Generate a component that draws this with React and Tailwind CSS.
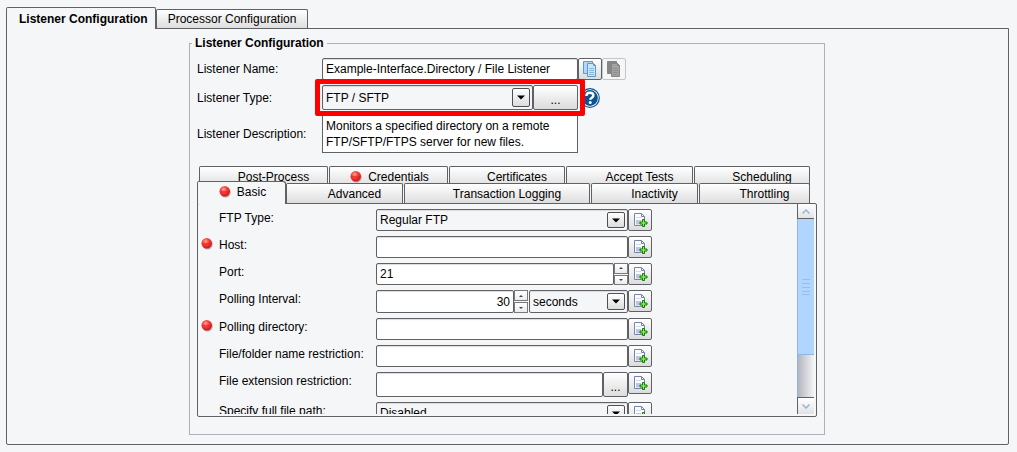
import React, { useState } from 'react';

const fieldClass = 'h-full min-w-0 flex-1 rounded-[2px] border border-[#5f6165] bg-white px-[3px] shadow-[inset_0_1px_1px_#dcdcdc]';
const buttonClass = 'flex shrink-0 items-center justify-center rounded-[2px] border border-[#5f6165] bg-linear-to-b from-white to-[#dcdcdc]';

function RedBall() {
    return (
        <svg width="14" height="14" viewBox="0 0 14 14" aria-hidden="true">
            <defs>
                <radialGradient id="ball" cx="0.4" cy="0.32" r="0.65">
                    <stop offset="0" stopColor="#ffa99c" />
                    <stop offset="0.4" stopColor="#fa4a42" />
                    <stop offset="1" stopColor="#dc1416" />
                </radialGradient>
            </defs>
            <circle cx="7.5" cy="7.2" r="5.2" fill="#8b8b8b" opacity="0.7" />
            <circle cx="6.7" cy="6.2" r="5.2" fill="url(#ball)" />
            <path d="M2.5 6.8h8.4" stroke="#c81a1a" strokeWidth="0.8" opacity="0.6" />
        </svg>
    );
}

function AddPageIcon() {
    return (
        <svg width="16" height="16" viewBox="0 0 16 16" aria-hidden="true">
            <path d="M2.5 1.5h7l3 3v9h-10z" fill="#fbfcff" stroke="#7585ad" />
            <path d="M9.5 1.5v3h3" fill="none" stroke="#7585ad" />
            <path d="M4 5.5h5" stroke="#d3d7e6" />
            <path d="M4 8h5v4.5H4z" fill="#bfc4dd" />
            <path d="M10.500 7.500h2v2.500h2.500v2h-2.500v2.500h-2v-2.500h-2.500v-2h2.500z" fill="#8df04c" stroke="#0a7d0a" />
        </svg>
    );
}

function PagesIcon({ disabled }) {
    const back = disabled ? '#868686' : '#b4d6f0';
    const front = disabled ? '#a3a3a3' : '#cbe5f8';
    const line = disabled ? '#858585' : '#5a9acb';
    return (
        <svg width="16" height="18" viewBox="0 0 16 18" aria-hidden="true">
            <path d="M1.5 1.5h9v12h-9z" fill={back} stroke={line} />
            <path d="M5.5 3.5h6l2 2v11h-8z" fill={front} stroke={line} />
            <path d="M11.5 3.5v2h2" fill="none" stroke={line} />
            <path d="M7 8.5h5M7 10.5h5M7 12.5h5M7 14.5h5" stroke={line} opacity="0.6" />
        </svg>
    );
}

function HelpIcon() {
    return (
        <svg width="20" height="20" viewBox="0 0 20 20" aria-hidden="true">
            <circle cx="10" cy="10" r="9.3" fill="#fff" stroke="#0d5590" strokeWidth="1.2" />
            <circle cx="10" cy="10" r="7.9" fill="#0d5590" />
            <path d="M6.4 8c0-2.300 1.500-3.200 3.500-3.200s3.500 0.900 3.500 2.700c0 2.200-3.200 2.100-3.200 4.300" fill="none" stroke="#fff" strokeWidth="2.400" />
            <circle cx="10.200" cy="14.600" r="1.500" fill="#fff" />
        </svg>
    );
}

function DropDown({ id, options, label, className = 'h-full flex-1' }) {
    return (
        <div className={`relative min-w-0 ${className}`}>
            <select
                id={id}
                aria-label={label}
                className="h-full w-full appearance-none rounded-[2px] border border-[#5f6165] bg-[#f4f6f8] px-[3px] shadow-[inset_0_1px_1px_#dcdcdc]"
            >
                {options.map(o => <option key={o}>{o}</option>)}
            </select>
            <span className="pointer-events-none absolute inset-y-[3px] right-[3px] flex w-[18px] items-center justify-center rounded-[2px] border border-[#4d4f52] bg-linear-to-b from-white to-[#dcdcdc]">
                <svg width="8" height="5" viewBox="0 0 8 5" aria-hidden="true">
                    <path d="M0 0.500h8L4 4.500z" fill="#000" />
                </svg>
            </span>
        </div>
    );
}

function SpinnerButtons({ name }) {
    const cls = 'flex flex-1 items-center justify-center border border-[#77797d] bg-linear-to-b from-white to-[#ececec]';
    return (
        <span className="flex h-full w-[14px] shrink-0 flex-col gap-px">
            <button type="button" aria-label={`Increase ${name}`} className={cls}>
                <svg width="4" height="2" viewBox="0 0 4 2"><path d="M0 2h4L2 0z" fill="#444" /></svg>
            </button>
            <button type="button" aria-label={`Decrease ${name}`} className={cls}>
                <svg width="4" height="2" viewBox="0 0 4 2"><path d="M0 0h4L2 2z" fill="#444" /></svg>
            </button>
        </span>
    );
}

// One line of the form: required marker, label, the field and its add button
function FormRow({ id, label, required, height = 'h-[22px]', children }) {
    return (
        <div className={`flex shrink-0 items-start ${height}`}>
            <span className="flex w-[21px] shrink-0 pl-[2px] pt-px">{required && <RedBall />}</span>
            <label htmlFor={id} className="w-[157px] shrink-0 pt-px leading-[17px] whitespace-nowrap">{label}</label>
            <div className="flex h-full w-[252px]">{children}</div>
            <button type="button" aria-label={`Add to ${label}`} className={`${buttonClass} h-[22px] w-[24px]`}>
                <AddPageIcon />
            </button>
        </div>
    );
}

const backTabs = [
    { name: 'Post-Process' },
    { name: 'Credentials', required: true },
    { name: 'Certificates' },
    { name: 'Accept Tests' },
    { name: 'Scheduling' },
];

const frontTabs = [
    { name: 'Basic', required: true },
    { name: 'Advanced' },
    { name: 'Transaction Logging' },
    { name: 'Inactivity' },
    { name: 'Throttling' },
];

function SettingTab({ tab, selected, onSelect }) {
    const look = selected
        ? 'z-10 -mt-[2px] -mb-px rounded-tr-[3px] bg-[#f4f6f8] pb-[3px]'
        : 'mr-px bg-linear-to-b from-white to-[#dedede]';
    return (
        <button
            type="button"
            role="tab"
            aria-selected={selected}
            onClick={() => onSelect(tab.name)}
            className={`relative flex items-center justify-center gap-1 rounded-t-[2px] border border-b-0 border-[#5f6165] whitespace-nowrap ${look}`}
        >
            <span className="w-[16px] pl-px">{tab.required && <RedBall />}</span>
            {tab.name}
        </button>
    );
}

function ScrollBar() {
    return (
        <div className="flex w-[17px] shrink-0 flex-col" aria-hidden="true">
            <div className="flex h-[15px] items-center justify-center border-b border-l border-[#5f6165] bg-linear-to-b from-white to-[#e2e2e2]">
                <svg width="8" height="5" viewBox="0 0 8 5"><path d="M0.500 4.500L4 1l3.500 3.500" fill="none" stroke="#8fb6e2" strokeWidth="1.500" /></svg>
            </div>
            <div className="flex flex-[137] items-center justify-center border-b border-l border-[#8fb6e2] bg-[#b0d5ff]">
                <svg width="8" height="18" viewBox="0 0 8 18"><path d="M0 1.500h8M0 5.500h8M0 9.500h8M0 13.500h8M0 16.500h8" stroke="#93bfee" /></svg>
            </div>
            <div className="flex-[42] border-l border-[#8fb6e2] bg-linear-to-r from-[#b4b4c0] to-[#f4f4f4]" />
            <div className="flex h-[17px] items-center justify-center border-t border-l border-[#5f6165] bg-linear-to-b from-white to-[#e2e2e2]">
                <svg width="8" height="5" viewBox="0 0 8 5"><path d="M0.500 0.500L4 4l3.500-3.500" fill="none" stroke="#8fb6e2" strokeWidth="1.500" /></svg>
            </div>
        </div>
    );
}

function ListenerForm() {
    const [active, setActive] = useState('Basic');

    return (
        <fieldset className="mx-auto w-full max-w-[636px] border border-[#aeafba] px-[7px] pb-[17px]">
            <legend className="-ml-[5px] px-[3px] leading-[15px] font-bold">Listener Configuration</legend>

            <div className="flex flex-col gap-[5px] pt-[7px]">
                <div className="flex h-[22px] items-center">
                    <label htmlFor="name" className="w-[125px] shrink-0">Listener Name:</label>
                    <input id="name" defaultValue="Example-Interface.Directory / File Listener" className={`${fieldClass} max-w-[256px]`} />
                    <button type="button" aria-label="Copy" className={`${buttonClass} h-[22px] w-[24px]`}>
                        <PagesIcon />
                    </button>
                    <button type="button" aria-label="Paste" disabled className="flex h-[22px] w-[24px] items-center justify-center rounded-[2px] border border-[#c4c5c8]">
                        <PagesIcon disabled />
                    </button>
                </div>

                <div className="flex h-[25px] items-center">
                    <label htmlFor="type" className="w-[125px] shrink-0">Listener Type:</label>
                    <div className="relative flex h-full w-[256px]">
                        <DropDown id="type" options={['FTP / SFTP']} />
                        <button type="button" aria-label="Edit listener type" className={`${buttonClass} w-[45px] pt-1`}>...</button>
                        {/* red highlight around the type selector */}
                        <span className="pointer-events-none absolute -inset-x-[7px] -inset-y-[6px] z-10 rounded-[2px] border-5 border-[#ff0000]" />
                    </div>
                    <button type="button" aria-label="Help" className="ml-[2px]"><HelpIcon /></button>
                </div>

                <div className="flex items-center">
                    <label htmlFor="description" className="w-[125px] shrink-0">Listener Description:</label>
                    <textarea
                        id="description"
                        rows={2}
                        readOnly
                        defaultValue="Monitors a specified directory on a remote FTP/SFTP/FTPS server for new files."
                        className="w-[256px] resize-none overflow-hidden border border-[#5f6165] bg-white px-[3px] py-[2px] leading-[16px]"
                    />
                </div>
            </div>

            <div role="tablist" className="relative mt-[13px]">
                <div className="mr-[6px] ml-[2px] -mb-[4px] grid h-[21px] grid-cols-[130fr_120fr_117fr_128fr_117fr]">
                    {backTabs.map(t => <SettingTab key={t.name} tab={t} onSelect={setActive} />)}
                </div>
                <div className="relative mr-[6px] grid h-[20px] grid-cols-[89fr_118fr_187fr_108fr_112fr]">
                    {frontTabs.map(t => <SettingTab key={t.name} tab={t} selected={t.name === 'Basic'} onSelect={setActive} />)}
                </div>
            </div>

            <div role="tabpanel" aria-label={active} className="flex h-[214px] rounded-[2px] border border-[#5f6165] pr-[2px] pb-[2px]">
                <div className="flex min-w-0 flex-1 flex-col gap-[5px] overflow-hidden pt-[5px]">
                    <FormRow id="ftp-type" label="FTP Type:">
                        <DropDown id="ftp-type" options={['Regular FTP']} />
                    </FormRow>
                    <FormRow id="host" label="Host:" required>
                        <input id="host" className={fieldClass} />
                    </FormRow>
                    <FormRow id="port" label="Port:">
                        <input id="port" defaultValue="21" className={fieldClass} />
                        <SpinnerButtons name="port" />
                    </FormRow>
                    <FormRow id="interval" label="Polling Interval:" height="h-[23px]">
                        <input id="interval" defaultValue="30" className={`${fieldClass} text-right`} />
                        <SpinnerButtons name="interval" />
                        <DropDown label="Interval unit" options={['seconds']} className="ml-px h-full w-[99px]" />
                    </FormRow>
                    <FormRow id="directory" label="Polling directory:" required>
                        <input id="directory" className={fieldClass} />
                    </FormRow>
                    <FormRow id="name-restriction" label="File/folder name restriction:">
                        <input id="name-restriction" className={fieldClass} />
                    </FormRow>
                    <FormRow id="extension" label="File extension restriction:" height="h-[25px]">
                        <input id="extension" className={fieldClass} />
                        <button type="button" aria-label="Edit extensions" className={`${buttonClass} w-[25px] pt-1`}>...</button>
                    </FormRow>
                    <FormRow id="full-path" label="Specify full file path:">
                        <DropDown id="full-path" options={['Disabled']} />
                    </FormRow>
                </div>
                <ScrollBar />
            </div>
        </fieldset>
    );
}

function App() {
    return (
        <main className="min-h-screen bg-[#f4f6f8] pt-[7px] pr-[8px] pb-[7px] pl-[6px] font-['Liberation_Sans',Arial,sans-serif] text-[12px] text-black">
            <div role="tablist" className="flex items-end">
                <button type="button" role="tab" aria-selected="true" className="relative z-10 -mb-px h-[22px] rounded-t-[2px] border border-b-0 border-[#5f6165] bg-[#f4f6f8] pr-[7px] pl-[12px] font-bold">
                    Listener Configuration
                </button>
                <button type="button" role="tab" aria-selected="false" className="h-[19px] rounded-t-[2px] border border-b-0 border-[#5f6165] bg-linear-to-b from-white to-[#dedede] px-[11px]">
                    Processor Configuration
                </button>
            </div>
            <div className="rounded-b-[2px] border border-[#5f6165] pt-[7px] pr-[9px] pb-[9px] pl-[8px]">
                <ListenerForm />
            </div>
        </main>
    );
}

export default App;
